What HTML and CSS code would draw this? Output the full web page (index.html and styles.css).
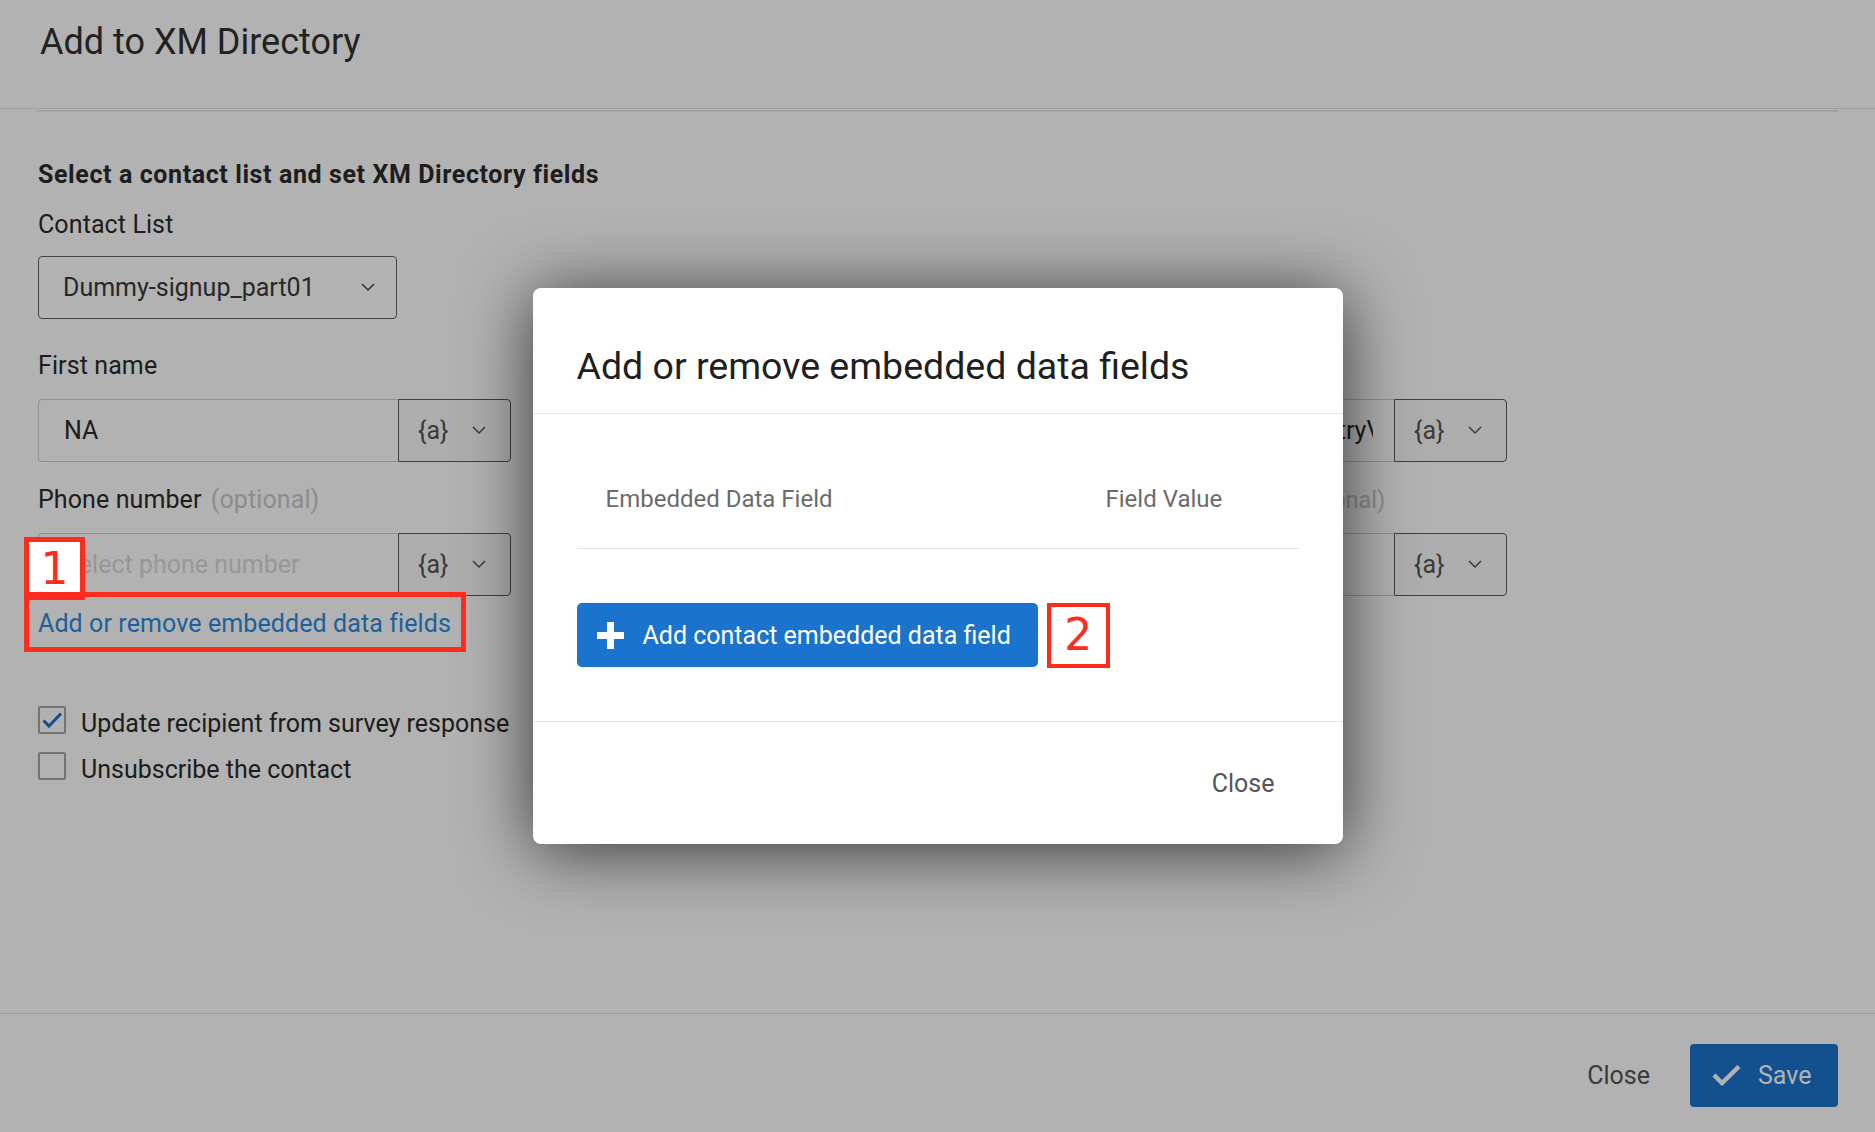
FILE: index.html
```html
<!DOCTYPE html>
<html lang="en">
<head>
<meta charset="utf-8">
<title>Add to XM Directory</title>
<link rel="stylesheet" href="styles.css">
</head>
<body>
<div class="page">
  <header class="page-header">
    <h1 class="page-title">Add to XM Directory</h1>
  </header>
  <div class="rule"></div>
  <main class="page-body">
    <h2 class="section-title">Select a contact list and set XM Directory fields</h2>
    <div class="label label-contact">Contact List</div>
    <div class="select">
      <span>Dummy-signup_part01</span>
      <svg class="chev" width="14" height="9" viewBox="0 0 14 9"><polyline points="1,1 7,7 13,1" fill="none" stroke="#444" stroke-width="1.5"/></svg>
    </div>

    <div class="fields">
      <div class="field">
        <div class="label">First name</div>
        <div class="input-group">
          <div class="input"><span class="value">NA</span></div>
          <div class="var-btn"><span>{a}</span><svg width="14" height="9" viewBox="0 0 14 9"><polyline points="1,1 7,7 13,1" fill="none" stroke="#555" stroke-width="1.5"/></svg></div>
        </div>
      </div>
      <div class="field">
        <div class="label">Last name</div>
        <div class="input-group">
          <div class="input"><span class="value">NA</span></div>
          <div class="var-btn"><span>{a}</span><svg width="14" height="9" viewBox="0 0 14 9"><polyline points="1,1 7,7 13,1" fill="none" stroke="#555" stroke-width="1.5"/></svg></div>
        </div>
      </div>
      <div class="field">
        <div class="label">Email</div>
        <div class="input-group">
          <div class="input"><span class="value">${q://QID3/ChoiceTextEntryValue}</span></div>
          <div class="var-btn"><span>{a}</span><svg width="14" height="9" viewBox="0 0 14 9"><polyline points="1,1 7,7 13,1" fill="none" stroke="#555" stroke-width="1.5"/></svg></div>
        </div>
      </div>
      <div class="field">
        <div class="label">Phone number <span class="optional">(optional)</span></div>
        <div class="input-group">
          <div class="input"><span class="value placeholder">Select phone number</span></div>
          <div class="var-btn"><span>{a}</span><svg width="14" height="9" viewBox="0 0 14 9"><polyline points="1,1 7,7 13,1" fill="none" stroke="#555" stroke-width="1.5"/></svg></div>
        </div>
      </div>
      <div class="field">
        <div class="label">Language <span class="optional">(optional)</span></div>
        <div class="input-group">
          <div class="input"><span class="value placeholder">Select language</span></div>
          <div class="var-btn"><span>{a}</span><svg width="14" height="9" viewBox="0 0 14 9"><polyline points="1,1 7,7 13,1" fill="none" stroke="#555" stroke-width="1.5"/></svg></div>
        </div>
      </div>
      <div class="field">
        <div class="label label-compact">External data reference <span class="optional">(optional)</span></div>
        <div class="input-group">
          <div class="input"><span class="value placeholder"></span></div>
          <div class="var-btn"><span>{a}</span><svg width="14" height="9" viewBox="0 0 14 9"><polyline points="1,1 7,7 13,1" fill="none" stroke="#555" stroke-width="1.5"/></svg></div>
        </div>
      </div>
    </div>

    <a class="link" href="#">Add or remove embedded data fields</a>

    <div class="checks">
      <div class="check">
        <span class="box">
          <svg width="24" height="24" viewBox="0 0 24 24"><polyline points="3.5,12.5 9,18 21,5.5" fill="none" stroke="#1a73cc" stroke-width="3"/></svg>
        </span>
        <span>Update recipient from survey response</span>
      </div>
      <div class="check">
        <span class="box"></span>
        <span>Unsubscribe the contact</span>
      </div>
    </div>
  </main>
  <footer class="page-footer">
    <span class="footer-close">Close</span>
    <span class="save-btn">
      <svg width="29" height="22" viewBox="0 0 29 22"><polyline points="2,11 10,19 27,2.5" fill="none" stroke="#fff" stroke-width="4.5"/></svg>
      <span>Save</span>
    </span>
  </footer>
</div>

<div class="overlay">
  <div class="modal">
    <div class="modal-header">
      <h2 class="modal-title">Add or remove embedded data fields</h2>
    </div>
    <div class="modal-body">
      <div class="table-head">
        <span>Embedded Data Field</span>
        <span>Field Value</span>
      </div>
      <div class="add-row">
        <span class="btn-primary">
          <svg width="27" height="27" viewBox="0 0 27 27"><rect x="10" y="0" width="7" height="27" fill="#fff"/><rect x="0" y="10" width="27" height="7" fill="#fff"/></svg>
          <span>Add contact embedded data field</span>
        </span>
        <span class="badge badge-2">2</span>
      </div>
    </div>
    <div class="modal-footer">
      <span class="modal-close">Close</span>
    </div>
  </div>
</div>

<div class="badge badge-1">1</div>
<div class="annot-box"></div>
</body>
</html>
```
FILE: styles.css
```css
* { box-sizing: border-box; }
html, body { margin: 0; padding: 0; }
body {
  width: 1875px;
  height: 1132px;
  overflow: hidden;
  position: relative;
  background: #fff;
  font-family: Roboto, "Noto Sans", sans-serif;
  color: #2b2b2b;
}

.page {
  height: 1132px;
  display: flex;
  flex-direction: column;
  background: #fff;
}

.page-header {
  flex: none;
  height: 109px;
  padding: 20px 40px 0;
  border-bottom: 1px solid #e2e2e2;
}
.page-title {
  margin: 0;
  font-size: 36px;
  line-height: 44px;
  font-weight: 400;
  color: #313131;
}
.rule {
  flex: none;
  height: 2px;
  margin: 1px 37px 0 36px;
  background: #e9e9e9;
}

.page-body {
  flex: 1;
  padding: 0 38px;
}
.section-title {
  margin: 49px 0 0;
  font-size: 25px;
  line-height: 28px;
  font-weight: 700;
  letter-spacing: 0.6px;
  color: #2b2b2b;
}
.label {
  font-size: 25px;
  line-height: 30px;
  letter-spacing: 0.1px;
  color: #2b2b2b;
  white-space: nowrap;
}
.label-compact { font-size: 23.5px; letter-spacing: 0; }
.label-contact { margin-top: 21px; }
.optional { color: #c9c9c9; margin-left: 3px; }

.select {
  margin-top: 16px;
  width: 359px;
  height: 63px;
  border: 1px solid #606060;
  border-radius: 4px;
  display: flex;
  align-items: center;
  justify-content: space-between;
  padding: 0 21px 0 24px;
  font-size: 25px;
  color: #3a3a3a;
}

.fields {
  display: grid;
  grid-template-columns: repeat(3, 473px);
  column-gap: 25px;
  row-gap: 23px;
  margin-top: 32px;
}
.input-group {
  display: flex;
  height: 63px;
  margin-top: 18px;
}
.input {
  flex: none;
  width: 360px;
  display: flex;
  align-items: center;
  padding: 0 21px 0 25px;
  border: 1px solid #cfcfcf;
  border-right: none;
  border-radius: 4px 0 0 4px;
  background: #fff;
  font-size: 25px;
  color: #2a2a2a;
}
.value {
  flex: 1;
  min-width: 0;
  overflow: hidden;
  white-space: nowrap;
}
.placeholder { color: #d9d9d9; }
.var-btn {
  flex: none;
  width: 113px;
  display: flex;
  align-items: center;
  justify-content: space-between;
  padding: 0 24px 0 19px;
  border: 1px solid #5c5c5c;
  border-radius: 0 4px 4px 0;
  background: #f8f8f8;
  font-size: 25px;
  color: #555;
}

.link {
  display: block;
  width: max-content;
  margin-top: 13px;
  font-size: 25px;
  line-height: 30px;
  letter-spacing: 0.1px;
  color: #2a8ce0;
  text-decoration: none;
}

.checks {
  margin-top: 69px;
  display: flex;
  flex-direction: column;
  gap: 16px;
}
.check {
  display: flex;
  align-items: center;
  height: 30px;
  font-size: 25px;
  color: #2b2b2b;
}
.box {
  flex: none;
  width: 28px;
  height: 28px;
  margin: 0 15px 6px 0;
  border: 2px solid #a4a4a4;
  border-radius: 2px;
  display: flex;
  align-items: center;
  justify-content: center;
}

.page-footer {
  flex: none;
  height: 119px;
  border-top: 1px solid #e0e0e0;
  display: flex;
  align-items: center;
  justify-content: flex-end;
  padding: 4px 37px 0 0;
}
.footer-close {
  font-size: 25px;
  color: #555;
  margin-right: 40px;
}
.save-btn {
  width: 148px;
  height: 63px;
  border-radius: 4px;
  background: #1a73cc;
  color: #fff;
  font-size: 25px;
  display: flex;
  align-items: center;
  gap: 17px;
  padding: 0 0 0 22px;
}

/* modal overlay */
.overlay {
  position: absolute;
  inset: 0;
  background: rgba(0, 0, 0, 0.3);
  display: flex;
  align-items: center;
  justify-content: center;
}
.modal {
  width: 810px;
  height: 556px;
  background: #fff;
  border-radius: 8px;
  box-shadow: 0 6px 70px rgba(0, 0, 0, 0.7);
  display: flex;
  flex-direction: column;
}
.modal-header {
  flex: none;
  height: 126px;
  padding: 56px 44px 0;
  border-bottom: 1px solid #e6e6e6;
}
.modal-title {
  margin: 0;
  font-size: 37.5px;
  line-height: 44px;
  font-weight: 400;
  color: #1f1f1f;
  white-space: nowrap;
}
.modal-body {
  flex: none;
  padding: 0 43px 0 44px;
}
.table-head {
  height: 135px;
  display: grid;
  grid-template-columns: 500px 1fr;
  align-items: end;
  padding: 0 0 34px 29px;
  border-bottom: 1px solid #e4e4e4;
  font-size: 24px;
  line-height: 30px;
  color: #6b6b6b;
}
.add-row {
  display: flex;
  align-items: center;
  margin: 54px 0;
  height: 64px;
}
.btn-primary {
  height: 64px;
  display: flex;
  align-items: center;
  gap: 19px;
  padding: 0 27px 0 20px;
  border-radius: 5px;
  background: #1a73cc;
  color: #fff;
  font-size: 25px;
}
.modal-footer {
  flex: 1;
  display: flex;
  align-items: center;
  justify-content: flex-end;
  padding-right: 68px;
  border-top: 1px solid #e6e6e6;
}
.modal-close {
  font-size: 25px;
  color: #555;
}

/* annotations */
.badge {
  display: flex;
  align-items: center;
  justify-content: center;
  border: 5px solid #ff2b1c;
  background: #fff;
  color: #ff2b1c;
  font-family: "DejaVu Sans", sans-serif;
  font-weight: 400;
  font-size: 44px;
  line-height: 1;
}
.badge-2 {
  flex: none;
  width: 63px;
  height: 65px;
  margin-left: 9px;
  border-width: 4px;
}
.badge-1 {
  position: absolute;
  left: 24px;
  top: 537px;
  width: 61px;
  height: 63px;
}
.annot-box {
  position: absolute;
  left: 24px;
  top: 592px;
  width: 442px;
  height: 60px;
  border: 5px solid #ff2b1c;
}
```
